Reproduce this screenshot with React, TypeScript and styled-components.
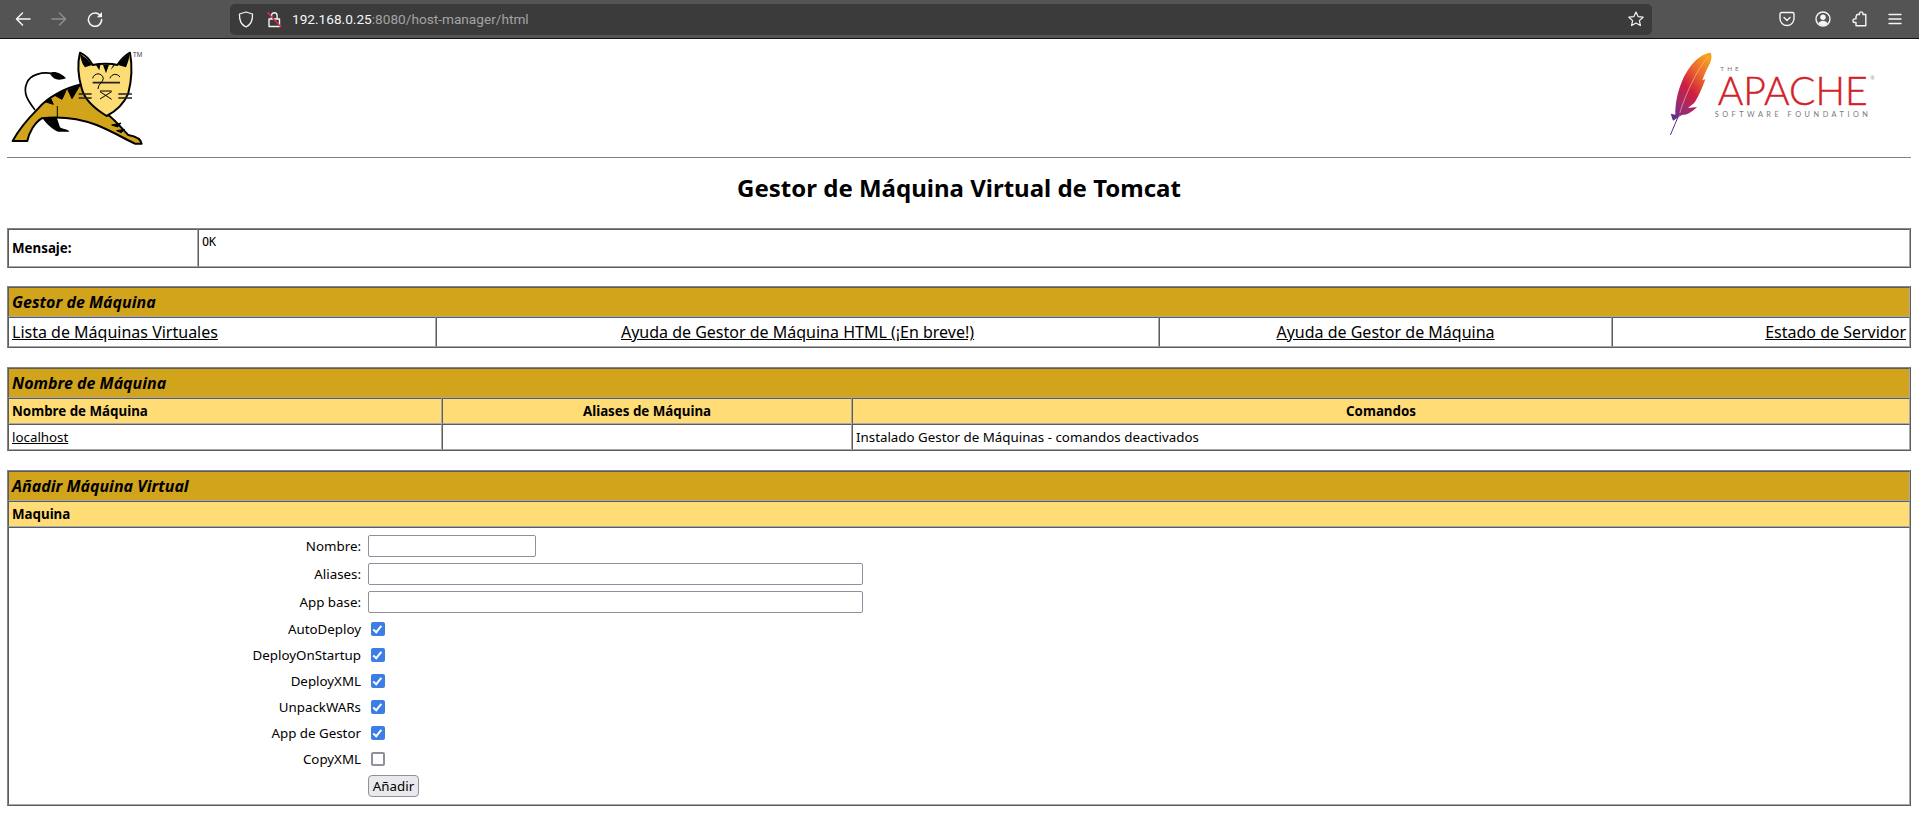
import React from "react";
import styled, { createGlobalStyle } from "styled-components";

const Global = createGlobalStyle`
  html, body { margin: 0; padding: 0; background: #fff; }
  body { font-family: "Noto Sans", "Open Sans", sans-serif; color: #000; overflow: hidden; }
`;

const Toolbar = styled.header`
  display: flex;
  align-items: center;
  height: 38px;
  background: #545454;
  border-bottom: 1px solid #121212;
  padding: 0 6px 0 5px;
`;
const IconButton = styled.div`
  width: 36px;
  height: 36px;
  flex: none;
  display: flex;
  align-items: center;
  justify-content: center;
  color: ${(p: { $dim?: boolean }) => (p.$dim ? "#8e8e8e" : "#f6f6f6")};
`;
const NavGroup = styled.div`
  display: flex;
  margin-right: 117px;
`;
const ToolGroup = styled.div`
  display: flex;
  margin-left: 117px;
`;
const AddressBar = styled.div`
  flex: 1;
  height: 31px;
  display: flex;
  align-items: center;
  background: #3b3b3b;
  border-radius: 5px;
  padding: 0 8px 0 6px;
  color: #f4f4f4;
`;
const AddressIcon = styled.span`
  display: flex;
  width: ${(p: { $w: number }) => p.$w}px;
  flex: none;
  justify-content: center;
`;
const Url = styled.div`
  flex: 1;
  font-family: "Roboto", "Noto Sans", sans-serif;
  font-size: 13.65px;
  color: #a3a3a3;
  white-space: nowrap;
`;
const Host = styled.span`
  color: #f6f6f6;
`;

const Page = styled.main`
  padding: 0 8px 0 7px;
`;
const Banner = styled.div`
  height: 118px;
  display: flex;
  justify-content: space-between;
  align-items: flex-start;
`;
const CatLogo = styled.svg`
  width: 133.3px;
  height: 96.7px;
  margin: 11px 0 0 3px;
`;
const ApacheLogo = styled.svg`
  width: 216.7px;
  height: 93.3px;
  margin: 8px 31px 0 0;
`;
const Rule = styled.div`
  height: 1px;
  background: #808080;
`;
const Title = styled.h1`
  margin: 13px 0 24px;
  font-size: 24px;
  line-height: 33px;
  font-weight: 700;
  text-align: center;
`;
const Table = styled.table`
  width: 100%;
  table-layout: fixed;
  border-spacing: 0;
  border-style: solid;
  border-width: 1px;
  border-color: #858585 #5c5c5c #5c5c5c #858585;
  margin-bottom: 19px;
`;
const MessageTable = styled(Table)`
  margin-bottom: 18px;
`;
const Col = styled.col<{ $w?: number }>`
  width: ${(p) => (p.$w ? `${p.$w}px` : "auto")};
`;
const Cell = styled.td<{ $align?: string; $top?: boolean }>`
  border-style: solid;
  border-width: 1px;
  border-color: #5c5c5c #a9a9a9 #a9a9a9 #5c5c5c;
  padding: 3px;
  font-size: 13.33px;
  line-height: 18px;
  text-align: ${(p) => p.$align || "left"};
  vertical-align: ${(p) => (p.$top ? "top" : "middle")};
`;
const MessageLabel = styled(Cell)`
  font-weight: 700;
  height: 30px;
`;
const MessageText = styled.div`
  font-family: "DejaVu Sans Mono", monospace;
  font-size: 11.8px;
  line-height: 14px;
  margin-top: 2px;
`;
const SectionTitle = styled(Cell)`
  background: #d2a41c;
  font-size: 16px;
  line-height: 22px;
  font-weight: 700;
  font-style: italic;
`;
const HeadCell = styled(Cell)`
  background: #ffdc75;
  font-weight: 700;
`;
const NavCell = styled(Cell)`
  font-size: 16px;
  line-height: 22px;
`;
const Link = styled.a`
  color: #000;
  text-decoration: underline;
`;
const FormCell = styled(Cell)`
  padding: 4px 3px 4px;
`;
const FormRow = styled.div<{ $h: number }>`
  display: grid;
  grid-template-columns: 349px 1fr;
  column-gap: 7px;
  align-items: center;
  height: ${(p) => p.$h}px;
`;
const Label = styled.label`
  text-align: right;
`;
const TextInput = styled.input<{ $w: number }>`
  box-sizing: border-box;
  display: block;
  width: ${(p) => p.$w}px;
  height: 22px;
  padding: 0 4px;
  border: 1px solid #8f8f9d;
  border-radius: 2px;
  background: #fff;
`;
const Check = styled.input`
  appearance: none;
  box-sizing: border-box;
  position: relative;
  display: block;
  width: 14px;
  height: 14px;
  margin: 0 0 0 3px;
  border: 2px solid #8f8f9d;
  border-radius: 2px;
  background: #fff;
  &:checked {
    background: #3b7fe4;
    border-color: #3b7fe4;
  }
  &:checked::after {
    content: "";
    position: absolute;
    left: 2.4px;
    top: -0.4px;
    width: 3px;
    height: 6.5px;
    border: solid #fff;
    border-width: 0 2px 2px 0;
    transform: rotate(40deg);
  }
`;
const Submit = styled.button`
  display: block;
  box-sizing: border-box;
  width: 51px;
  height: 22px;
  padding: 0;
  font-family: inherit;
  font-size: 13.33px;
  line-height: 18px;
  color: #000;
  background: #e9e9ed;
  border: 1px solid #8f8f9d;
  border-radius: 4px;
`;

const Line = { fill: "none", stroke: "currentColor", strokeWidth: 1.5, strokeLinecap: "round", strokeLinejoin: "round" } as const;

const Back = () => (
  <svg width="16" height="16" viewBox="0 0 16 16" {...Line}>
    <path d="M15 8H1.5M7.5 2 1.5 8l6 6" />
  </svg>
);
const Forward = () => (
  <svg width="16" height="16" viewBox="0 0 16 16" {...Line}>
    <path d="M1 8h13.5M8.5 2l6 6-6 6" />
  </svg>
);
const Reload = () => (
  <svg width="16" height="16" viewBox="0 0 16 16" {...Line}>
    <path d="M13.6 5.2A6.6 6.6 0 1 0 14.6 8.6" />
    <path d="M15 1v5.2H9.8z" fill="currentColor" stroke="none" />
  </svg>
);
const Shield = () => (
  <svg width="16" height="17" viewBox="0 0 16 17" {...Line} strokeWidth={1.3}>
    <path d="M8 1 14.5 3c.3 6-1 10.500-6.500 13C2.500 13.500 1.200 9 1.500 3z" />
  </svg>
);
const BrokenLock = () => (
  <svg width="16" height="17" viewBox="0 0 16 17">
    <path d="M3 8h10.500v7.500H3zM5.500 8V4.500a2.800 2.800 0 0 1 5.600 0V8" fill="none" stroke="#f4f4f4" strokeWidth="1.400" strokeLinejoin="round" />
    <path d="M1.500 1.500 15 16" stroke="#e22850" strokeWidth="1.500" />
  </svg>
);
const Star = () => (
  <svg width="16" height="16" viewBox="0 0 16 16" {...Line} strokeWidth={1.2}>
    <path d="M8 1l2.100 4.600 5 .6-3.700 3.400 1 5L8 12.100 3.600 14.600l1-5L.9 6.200l5-.6z" />
  </svg>
);
const Pocket = () => (
  <svg width="16" height="16" viewBox="0 0 16 16" {...Line} strokeWidth={1.4}>
    <path d="M2.500 1.500h11A1.500 1.500 0 0 1 15 3v4.500a7 7 0 0 1-14 0V3a1.500 1.500 0 0 1 1.500-1.500z" />
    <path d="M5 6.500 8 9.500l3-3" />
  </svg>
);
const Account = () => (
  <svg width="16" height="16" viewBox="0 0 16 16" {...Line} strokeWidth={1.4}>
    <circle cx="8" cy="8" r="7" />
    <circle cx="8" cy="6.300" r="2.700" fill="currentColor" stroke="none" />
    <path d="M3.300 12.600c1-2 2.800-2.800 4.700-2.800s3.700.8 4.700 2.800A7 7 0 0 1 8 14.800a7 7 0 0 1-4.700-2.200z" fill="currentColor" stroke="none" />
  </svg>
);
const Puzzle = () => (
  <svg width="16" height="16" viewBox="0 0 16 16" {...Line} strokeWidth={1.4}>
    <path d="M6 3.500h2.500V2.300a1.800 1.800 0 0 1 3.500 0v1.200h2.800v11.300H5V11.500H3.800a1.800 1.800 0 1 1 0-3.600H5V5.600z" />
  </svg>
);
const Menu = () => (
  <svg width="16" height="16" viewBox="0 0 16 16" {...Line} strokeWidth={1.4}>
    <path d="M2 3.500h12M2 8h12M2 12.500h12" />
  </svg>
);

const Cat = () => (
  <CatLogo viewBox="30 60 400 290">
    <path d="M105 240C84 212 68 190 80 160c10-28 48-34 74-30" fill="none" stroke="#000" strokeWidth="5" />
    <path d="M150 130c10-10 35 0 48 15-18 6-38 8-48-15z" fill="#000" />
    <path d="M125 262c15 20 35 40 50 43h33c-3-7-18-7-28-13l-10-30z" fill="#000" />
    <path d="M245 163C190 175 140 205 115 235 85 265 55 300 38 333h44c5-26 22-55 43-68 45-5 105-2 165 20 50 20 90 45 115 56h20c-2-14-18-22-40-26-15-15-40-45-60-60z" fill="#d2a41c" stroke="#000" strokeWidth="6" strokeLinejoin="round" />
    <path d="M172 228v36M240 166l-36 14 12 26zM198 182l-34 14 22 12zM152 205l-18 10 26 8zM335 285l28-6-10 12zM350 302l24-4-10 10z" fill="#000" stroke="#000" strokeWidth="3" />
    <path d="M240 68c15 7 30 22 38 37 22-5 57-5 74 0 10-15 26-30 38-37 8 42 5 82-5 122-15 35-40 55-65 68-30-18-65-43-75-83-10-35-13-75-5-107z" fill="#fbdc75" stroke="#000" strokeWidth="6" strokeLinejoin="round" />
    <path d="M240 72c15 8 30 23 36 33l-21 7c-10-12-13-27-15-40zM388 72c-13 8-28 23-34 33l24 7c7-17 10-27 10-40zM309 104l9 26 9-26zM288 105l10 16 3-17zM340 104l-8 16 12-14z" fill="#000" />
    <path d="M278 158h82M236 192h39M236 204h39M355 192h41M355 204h41" stroke="#222" strokeWidth="5" fill="none" />
    <path d="M278 145c5-18 28-18 32 0 0 12-16 16-16 32M330 145c4-14 22-16 30-4M300 183h35M300 207l35-22M300 185l35 23" stroke="#000" strokeWidth="3" fill="none" />
    <text x="398" y="80" fontFamily="Liberation Sans, sans-serif" fontSize="20" fill="#444">TM</text>
  </CatLogo>
);

const Apache = () => (
  <ApacheLogo viewBox="40 20 650 280">
    <defs>
      <linearGradient id="quill" x1="0.8" y1="0" x2="0.1" y2="1">
        <stop offset="0" stopColor="#f8a01c" />
        <stop offset="0.28" stopColor="#e8622f" />
        <stop offset="0.52" stopColor="#cf1f3e" />
        <stop offset="0.78" stopColor="#a02a70" />
        <stop offset="1" stopColor="#5c2d91" />
      </linearGradient>
    </defs>
    <path d="M183 37c4 10 3 22-5 38-8 14-14 30-20 44l9-2c-8 22-18 46-30 66-6 10-16 14-22 20l27-3c-14 14-28 24-46 24l-8 5-18 12-3-8-4-13 14 3c-1-30 6-70 22-105 18-40 50-78 84-81z" fill="url(#quill)" />
    <path d="M176 48C140 90 105 165 86 232" fill="none" stroke="#f5c0a0" strokeWidth="2" />
    <path d="M90 218 62 284" fill="none" stroke="#5c2d91" strokeWidth="3" />
    <text x="212" y="92" fontFamily="Lato, sans-serif" fontWeight="400" fontSize="19" fill="#777" textLength="55" lengthAdjust="spacing">THE</text>
    <text x="204" y="193" fontFamily="Lato, sans-serif" fontWeight="300" fontSize="116" fill="#d22128" stroke="#d22128" strokeWidth="1.2" textLength="450" lengthAdjust="spacingAndGlyphs">APACHE</text>
    <text x="662" y="118" fontFamily="Lato, sans-serif" fontSize="16" fill="#999">®</text>
    <text x="195" y="231" fontFamily="Lato, sans-serif" fontWeight="400" fontSize="22" fill="#777" textLength="460" lengthAdjust="spacing">SOFTWARE FOUNDATION</text>
  </ApacheLogo>
);

const checks: [string, boolean][] = [
  ["AutoDeploy", true],
  ["DeployOnStartup", true],
  ["DeployXML", true],
  ["UnpackWARs", true],
  ["App de Gestor", true],
  ["CopyXML", false],
];

export default function App() {
  return (
    <>
      <Global />
      <Toolbar>
        <NavGroup>
          <IconButton><Back /></IconButton>
          <IconButton $dim><Forward /></IconButton>
          <IconButton><Reload /></IconButton>
        </NavGroup>
        <AddressBar>
          <AddressIcon $w={20}><Shield /></AddressIcon>
          <AddressIcon $w={36}><BrokenLock /></AddressIcon>
          <Url><Host>192.168.0.25</Host>:8080/host-manager/html</Url>
          <Star />
        </AddressBar>
        <ToolGroup>
          <IconButton><Pocket /></IconButton>
          <IconButton><Account /></IconButton>
          <IconButton><Puzzle /></IconButton>
          <IconButton><Menu /></IconButton>
        </ToolGroup>
      </Toolbar>
      <Page>
        <Banner>
          <Cat />
          <Apache />
        </Banner>
        <Rule />
        <Title>Gestor de Máquina Virtual de Tomcat</Title>

        <MessageTable>
          <colgroup><Col $w={190} /><Col /></colgroup>
          <tbody>
            <tr>
              <MessageLabel>Mensaje:</MessageLabel>
              <Cell $top><MessageText>OK</MessageText></Cell>
            </tr>
          </tbody>
        </MessageTable>

        <Table>
          <colgroup><Col $w={428} /><Col $w={723} /><Col $w={453} /><Col /></colgroup>
          <tbody>
            <tr><SectionTitle colSpan={4}>Gestor de Máquina</SectionTitle></tr>
            <tr>
              <NavCell><Link href="#">Lista de Máquinas Virtuales</Link></NavCell>
              <NavCell $align="center"><Link href="#">Ayuda de Gestor de Máquina HTML (¡En breve!)</Link></NavCell>
              <NavCell $align="center"><Link href="#">Ayuda de Gestor de Máquina</Link></NavCell>
              <NavCell $align="right"><Link href="#">Estado de Servidor</Link></NavCell>
            </tr>
          </tbody>
        </Table>

        <Table>
          <colgroup><Col $w={434} /><Col $w={410} /><Col /></colgroup>
          <tbody>
            <tr><SectionTitle colSpan={3}>Nombre de Máquina</SectionTitle></tr>
            <tr>
              <HeadCell>Nombre de Máquina</HeadCell>
              <HeadCell $align="center">Aliases de Máquina</HeadCell>
              <HeadCell $align="center">Comandos</HeadCell>
            </tr>
            <tr>
              <Cell><Link href="#">localhost</Link></Cell>
              <Cell />
              <Cell>Instalado Gestor de Máquinas - comandos deactivados</Cell>
            </tr>
          </tbody>
        </Table>

        <Table>
          <tbody>
            <tr><SectionTitle>Añadir Máquina Virtual</SectionTitle></tr>
            <tr><HeadCell>Maquina</HeadCell></tr>
            <tr>
              <FormCell>
                <form>
                  <FormRow $h={28}><Label>Nombre:</Label><TextInput $w={168} /></FormRow>
                  <FormRow $h={28}><Label>Aliases:</Label><TextInput $w={495} /></FormRow>
                  <FormRow $h={28}><Label>App base:</Label><TextInput $w={495} /></FormRow>
                  {checks.map(([name, on]) => (
                    <FormRow $h={26} key={name}>
                      <Label>{name}</Label>
                      <Check type="checkbox" defaultChecked={on} />
                    </FormRow>
                  ))}
                  <FormRow $h={28}><span /><Submit type="button">Añadir</Submit></FormRow>
                </form>
              </FormCell>
            </tr>
          </tbody>
        </Table>
      </Page>
    </>
  );
}
